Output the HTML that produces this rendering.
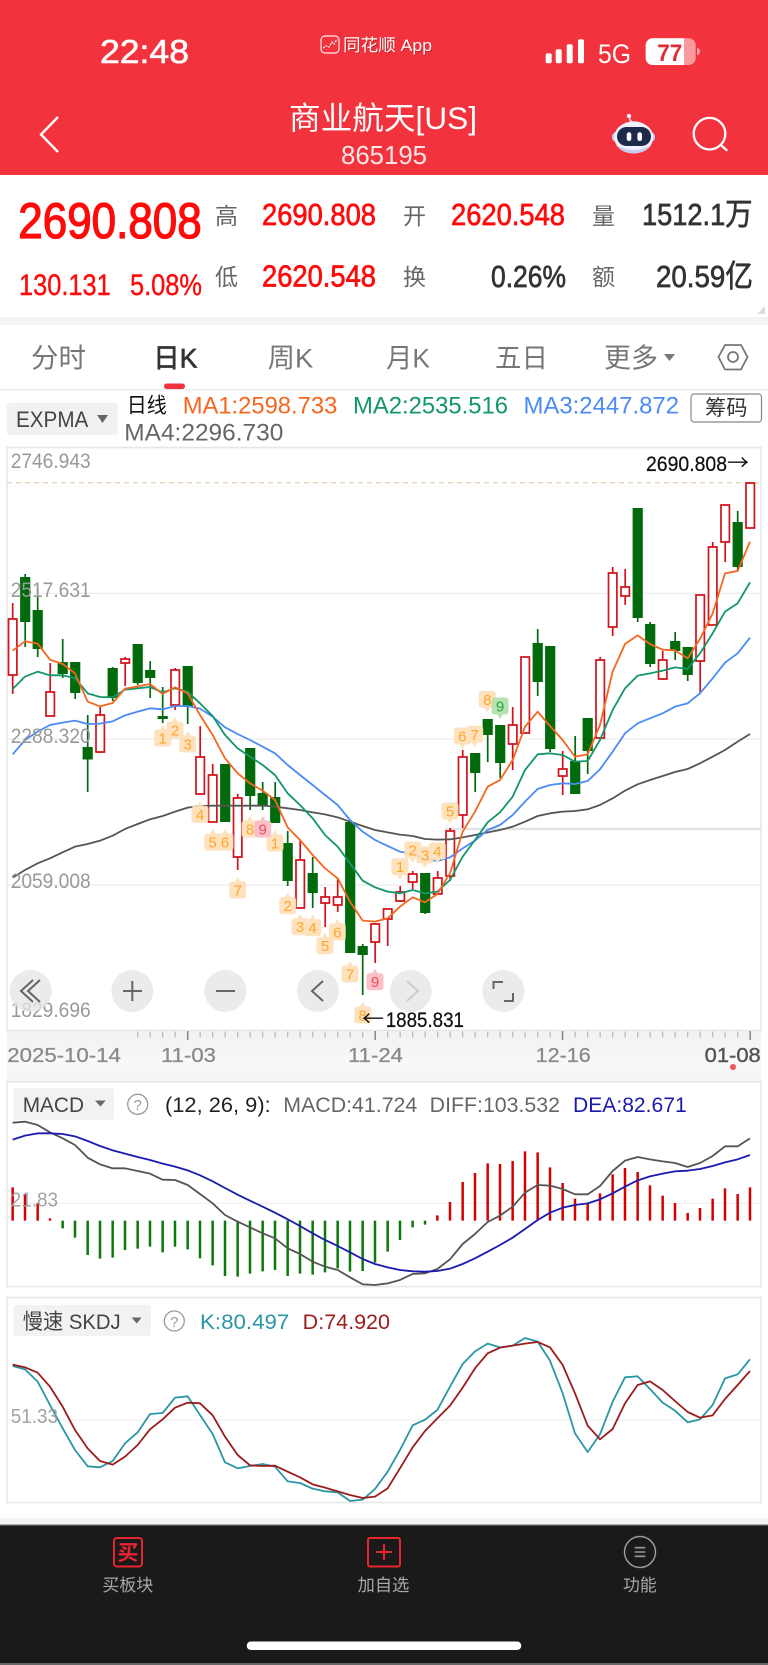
<!DOCTYPE html>
<html lang="zh"><head><meta charset="utf-8"><title>商业航天[US]</title>
<style>
html,body{margin:0;padding:0;background:#fff}
svg{display:block;font-family:"Liberation Sans","Noto Sans CJK SC",sans-serif}
</style></head><body>
<svg xmlns="http://www.w3.org/2000/svg" width="768" height="1665" viewBox="0 0 768 1665">
<rect width="768" height="1665" fill="#fff"/>
<!-- header -->
<rect width="768" height="175" fill="#f2323c"/>
<text x="100" y="63" font-size="33" fill="#fff" stroke="#fff" stroke-width=".6" textLength="89" lengthAdjust="spacingAndGlyphs">22:48</text>
<rect x="321" y="36" width="18" height="17" rx="4" fill="none" stroke="#fff" stroke-width="1.2" opacity=".9"/>
<path d="M323 48l3-2 3 1 3-5 2 2 3-5" fill="none" stroke="#fff" stroke-width="1.2" stroke-dasharray="2 1"/>
<text x="344" y="52" font-size="17" fill="#8a1018" opacity=".4" textLength="89" lengthAdjust="spacingAndGlyphs">同花顺 App</text>
<text x="343" y="51" font-size="17" fill="#fff" textLength="89" lengthAdjust="spacingAndGlyphs">同花顺 App</text>
<rect x="545.700" y="53.300" width="6" height="10" rx="1.800" fill="#fff"/><rect x="555.700" y="49.300" width="6" height="14" rx="1.800" fill="#fff"/><rect x="566.700" y="44.300" width="6" height="19" rx="1.800" fill="#fff"/><rect x="578" y="39.300" width="6" height="24" rx="1.800" fill="#fff"/>
<text x="598" y="63" font-size="27" fill="#fff" textLength="33" lengthAdjust="spacingAndGlyphs">5G</text>
<rect x="645.700" y="38.300" width="50" height="26.700" rx="7" fill="#fff" opacity=".5"/>
<path d="M652.700 38.300H684V65H652.700a7 7 0 0 1-7-7V45.300a7 7 0 0 1 7-7z" fill="#fff"/>
<path d="M697 48a3 3.500 0 0 1 0 7z" fill="#fff" opacity=".55"/>
<text x="657.300" y="60.800" font-size="24" font-weight="bold" fill="#e02a36" textLength="25" lengthAdjust="spacingAndGlyphs">77</text>
<text x="289" y="129" font-size="31.500" fill="#fff" textLength="188" lengthAdjust="spacingAndGlyphs">商业航天[US]</text>
<text x="341" y="164" font-size="26" fill="#fff" opacity=".88" textLength="86" lengthAdjust="spacingAndGlyphs">865195</text>
<path d="M58 117L41 134.500 58 152" fill="none" stroke="#fff" stroke-width="2.400"/>
<path d="M629.500 117q0 4 3 5" fill="none" stroke="#e6e8ff" stroke-width="1.500"/><circle cx="629" cy="116" r="2.200" fill="#e6e8ff"/>
<rect x="612" y="132" width="43" height="10" rx="4.500" fill="#c7cdf5"/>
<ellipse cx="633.700" cy="137.400" rx="19.500" ry="16" fill="#f0f1ff"/>
<path d="M616 145q17.700 10 35.400 0q-6 8.400-17.700 8.400t-17.700-8.400z" fill="#c9cdf2"/>
<rect x="617" y="127" width="34" height="19" rx="9.500" fill="#1e2a4a"/>
<rect x="626.700" y="132.300" width="4.600" height="8.700" rx="2.200" fill="#fff"/><rect x="637.400" y="132.300" width="4.600" height="8.700" rx="2.200" fill="#fff"/>
<circle cx="709.500" cy="133.700" r="15.800" fill="none" stroke="#fff" stroke-width="2.300"/>
<path d="M720.700 145l6.600 5.700" stroke="#fff" stroke-width="2.300" fill="none"/>
<!-- quote -->
<text x="18.300" y="238" font-size="50" fill="#ff0a0a" stroke="#ff0a0a" stroke-width="1.300" textLength="183.400" lengthAdjust="spacingAndGlyphs">2690.808</text>
<g fill="#666" font-size="23">
<text x="215" y="224">高</text><text x="403" y="224">开</text><text x="592" y="224">量</text>
<text x="215" y="285">低</text><text x="403" y="285">换</text><text x="592" y="285">额</text></g>
<g fill="#ff0a0a" font-size="30.500" stroke="#ff0a0a" stroke-width=".7">
<text x="262" y="225" textLength="114" lengthAdjust="spacingAndGlyphs">2690.808</text>
<text x="451" y="225" textLength="114" lengthAdjust="spacingAndGlyphs">2620.548</text>
<text x="262" y="286.700" textLength="114" lengthAdjust="spacingAndGlyphs">2620.548</text>
<text x="19" y="295" font-size="30" stroke-width=".4" textLength="91.700" lengthAdjust="spacingAndGlyphs">130.131</text>
<text x="130" y="295" font-size="30" stroke-width=".4" textLength="72" lengthAdjust="spacingAndGlyphs">5.08%</text></g>
<g fill="#333" font-size="31" stroke="#333" stroke-width=".7">
<text x="642" y="225" textLength="110.500" lengthAdjust="spacingAndGlyphs">1512.1万</text>
<text x="491" y="287" textLength="75" lengthAdjust="spacingAndGlyphs">0.26%</text>
<text x="656" y="287" textLength="97" lengthAdjust="spacingAndGlyphs">20.59亿</text></g>
<path d="M765 306v8h-8z" fill="#ddd"/>
<rect y="317" width="768" height="8" fill="#f4f4f4"/>
<!-- tabs -->
<g fill="#777" font-size="27">
<text x="31" y="367.500" textLength="55" lengthAdjust="spacingAndGlyphs">分时</text>
<text x="267.700" y="367.500" textLength="45.600" lengthAdjust="spacingAndGlyphs">周K</text>
<text x="386" y="367.500" textLength="44" lengthAdjust="spacingAndGlyphs">月K</text>
<text x="495" y="367.500" textLength="53" lengthAdjust="spacingAndGlyphs">五日</text>
<text x="604" y="367.500" textLength="54" lengthAdjust="spacingAndGlyphs">更多</text></g>
<text x="153.300" y="367.500" font-size="27" fill="#333" stroke="#333" stroke-width=".7" textLength="44" lengthAdjust="spacingAndGlyphs">日K</text>
<path d="M664 354h11l-5.500 7z" fill="#777"/>
<path d="M725 345h16l6.500 12-6.500 12.500h-16L718.500 357z" fill="none" stroke="#777" stroke-width="1.800"/>
<circle cx="733" cy="357" r="5" fill="none" stroke="#777" stroke-width="1.800"/>
<rect x="164" y="383.500" width="21" height="5.500" rx="2.700" fill="#f2323c"/>
<rect y="389" width="768" height="1.200" fill="#e6e6e6"/>
<!-- MA legend -->
<rect x="6.700" y="402.700" width="111" height="32.300" rx="3" fill="#f1f1f1"/>
<text x="16" y="427" font-size="22" fill="#444" textLength="72.300" lengthAdjust="spacingAndGlyphs">EXPMA</text>
<path d="M97 415h11l-5.500 8z" fill="#666"/>
<text x="126.700" y="412.500" font-size="21" fill="#111" textLength="40" lengthAdjust="spacingAndGlyphs">日线</text>
<text x="182.700" y="413.300" font-size="24.500" fill="#f5661f" textLength="154.600" lengthAdjust="spacingAndGlyphs">MA1:2598.733</text>
<text x="353" y="413.300" font-size="24.500" fill="#12966a" textLength="155" lengthAdjust="spacingAndGlyphs">MA2:2535.516</text>
<text x="523.500" y="413.300" font-size="24.500" fill="#4b8bf5" textLength="155.500" lengthAdjust="spacingAndGlyphs">MA3:2447.872</text>
<text x="124.300" y="440.700" font-size="24.500" fill="#666" textLength="159" lengthAdjust="spacingAndGlyphs">MA4:2296.730</text>
<rect x="691" y="394" width="70.500" height="28" rx="3" fill="#fff" stroke="#888" stroke-width="1.200"/>
<text x="705" y="415" font-size="21" fill="#333" textLength="42.500" lengthAdjust="spacingAndGlyphs">筹码</text>
<!-- main chart -->
<rect x="7" y="447.500" width="754" height="583" fill="#fff" stroke="#e6e6e6" stroke-width="1.500"/>
<path d="M7 593.300H761M7 739H761M7 885H761" stroke="#ececec" stroke-width="1.200" fill="none"/>
<path d="M445 829H761" stroke="#e2e2e2" stroke-width="2.200" fill="none"/>
<path d="M7 482.700H761" stroke="#e8d4b8" stroke-width="1.300" stroke-dasharray="5 4" fill="none"/>
<!-- green wicks -->
<path stroke="#006a0c" stroke-width="1.700" fill="none" d="M25.200 574V647M37.700 585V657M62.700 639V678M75.200 662V699M87.700 715V792M112.700 667V701M137.700 644V685M150.200 661V698M162.700 687V723M187.700 666V724M225.200 764V822M250.200 748V810M262.700 782V810M275.200 782V823M287.700 831V886M312.700 857V908M350.200 822V953M362.700 944V995M425.200 873V914M475.200 753V792M487.700 719V762M500.200 725V778M537.700 629V696M550.200 646V752M575.200 736V794M587.700 718V774M637.700 508V622M650.200 622V667M675.200 632V660M687.700 647V681M737.700 511V570"/>
<!-- green bodies -->
<path stroke="#006a0c" stroke-width="10.200" fill="none" d="M25.200 577V622M37.700 610V649M62.700 662V674M75.200 662V693M87.700 747V759.500M112.700 668V698M137.700 644V683M150.200 670V678M162.700 716V719M187.700 666V707M225.200 764V822M250.200 748V796M262.700 793V806M275.200 797V823M287.700 843V881M312.700 873V893M350.200 822V953M362.700 946V955M425.200 873V913M475.200 753V773M487.700 719V735M500.200 725V763M537.700 643V682M550.200 646V749M575.200 761V794M587.700 718V751M637.700 508V618M650.200 624V664M675.200 641V651M687.700 647V675M737.700 522V567"/>
<!-- red wicks -->
<path stroke="#d0121b" stroke-width="1.700" fill="none" d="M12.700 603V694M50.200 663V716M100.200 707V753M125.200 657V686M175.200 668V710M200.200 726V794M212.700 764V822M237.700 794V870M300.200 841V908M325.200 887V927M337.700 878V912M375.200 923V963M387.700 909V946M400.200 886V902M412.700 871V889M437.700 871V894M450.200 828V881M462.700 750V828M512.700 707V770M562.700 751V795M600.200 657V738M612.700 567V636M625.200 569V605M662.700 651V680M700.200 595V693M712.700 542V625M725.200 505V562"/>
<!-- red bodies -->
<path stroke="#d0121b" stroke-width="1.700" fill="#fff" d="M8.500 619h8.400v56h-8.400zM46 692h8.400v24h-8.400zM96 715h8.400v37h-8.400zM121 659h8.400v4h-8.400zM171 670h8.400v35h-8.400zM196 757h8.400v37h-8.400zM208.500 775h8.400v47h-8.400zM233.500 798h8.400v59h-8.400zM296 860h8.400v48h-8.400zM321 897h8.400v6h-8.400zM333.500 897h8.400v8h-8.400zM371 924h8.400v18h-8.400zM383.500 909h8.400v10h-8.400zM396 892h8.400v9h-8.400zM408.500 874h8.400v8h-8.400zM433.500 878h8.400v16h-8.400zM446 831h8.400v45h-8.400zM458.500 757h8.400v58h-8.400zM508.500 725h8.400v19h-8.400zM521 657h8.400v76h-8.400zM558.500 769h8.400v7h-8.400zM596 660h8.400v78h-8.400zM608.500 573h8.400v54h-8.400zM621 587h8.400v9h-8.400zM658.500 660h8.400v19h-8.400zM696 595h8.400v66h-8.400zM708.500 547h8.400v78h-8.400zM721 505h8.400v37h-8.400zM746 483h8.400v45h-8.400z"/>
<!-- MA lines -->
<g transform="translate(0,440) scale(.33333)" fill="none" stroke-width="5.400" stroke-linejoin="round">
<polyline stroke="#555" points="38,1313 75,1290 113,1270 150,1255 188,1237 225,1220 263,1212 300,1202 338,1187 375,1167 413,1152 450,1138 488,1128 525,1115 563,1103 600,1098 638,1097 675,1097 713,1097 750,1097 788,1097 825,1100 863,1105 900,1110 938,1117 975,1123 1013,1132 1050,1145 1088,1158 1125,1170 1163,1177 1200,1184 1238,1188 1275,1197 1312,1199 1350,1198 1388,1192 1425,1185 1463,1177 1500,1170 1538,1160 1575,1145 1613,1128 1650,1120 1688,1115 1725,1113 1763,1108 1800,1095 1838,1075 1875,1052 1913,1033 1950,1020 1988,1008 2025,996 2063,987 2100,970 2138,950 2175,930 2213,905 2250,882"/>
<polyline stroke="#4b8bf5" points="38,943 75,900 113,875 150,855 188,848 225,842 263,852 300,851 338,844 375,826 413,815 450,805 488,808 525,798 563,798 600,806 638,830 675,862 713,882 750,900 788,920 825,940 863,975 900,1005 938,1035 975,1065 1013,1095 1050,1140 1088,1175 1125,1200 1163,1218 1200,1235 1238,1242 1275,1258 1312,1263 1350,1252 1388,1225 1425,1202 1463,1170 1500,1155 1538,1125 1575,1085 1613,1047 1650,1035 1688,1030 1725,1032 1763,1023 1800,988 1838,935 1875,880 1913,850 1950,835 1988,820 2025,800 2063,790 2100,760 2138,715 2175,668 2213,640 2250,593"/>
<polyline stroke="#12966a" points="38,747 75,710 113,695 150,706 188,706 225,714 263,760 300,771 338,772 375,749 413,745 450,741 488,757 525,745 563,755 600,790 638,828 675,885 713,925 750,950 788,975 825,1005 863,1060 900,1095 938,1135 975,1185 1013,1220 1050,1270 1088,1322 1125,1342 1163,1355 1200,1360 1238,1350 1275,1360 1312,1355 1350,1320 1388,1250 1425,1200 1463,1147 1500,1117 1538,1070 1575,990 1613,943 1650,940 1688,945 1725,965 1763,963 1800,900 1838,810 1875,745 1913,707 1950,700 1988,692 2025,682 2063,687 2100,640 2138,580 2175,515 2213,490 2250,427"/>
<polyline stroke="#f5661f" points="38,632 75,604 113,611 150,659 188,672 225,700 263,785 300,799 338,789 375,746 413,739 450,732 488,762 525,742 563,760 600,825 638,885 675,955 713,1000 750,1030 788,1052 825,1080 863,1162 900,1200 938,1245 975,1285 1013,1315 1050,1385 1088,1442 1125,1445 1163,1435 1200,1400 1238,1372 1275,1387 1312,1362 1350,1300 1388,1175 1425,1115 1463,1040 1500,1020 1538,960 1575,860 1613,815 1650,858 1688,900 1725,950 1763,943 1800,855 1838,695 1875,612 1913,586 1950,612 1988,629 2025,631 2063,655 2100,597 2138,520 2175,400 2213,393 2250,305"/>
</g>
<!-- magic nine labels -->
<g font-size="15" text-anchor="middle">
<g fill="#fde0b8" opacity=".92">
<g transform="translate(162.700,738)"><rect x="-8.500" y="-8.500" width="17" height="17" rx="3"/><path d="M-3-8L0-13 3-8z"/></g>
<g transform="translate(175,730)"><rect x="-8.500" y="-8.500" width="17" height="17" rx="3"/><path d="M-3-8L0-13 3-8z"/></g>
<g transform="translate(187.700,744)"><rect x="-8.500" y="-8.500" width="17" height="17" rx="3"/><path d="M-3-8L0-13 3-8z"/></g>
<g transform="translate(200,814.300)"><rect x="-8.500" y="-8.500" width="17" height="17" rx="3"/><path d="M-3-8L0-13 3-8z"/></g>
<g transform="translate(212.700,842)"><rect x="-8.500" y="-8.500" width="17" height="17" rx="3"/><path d="M-3-8L0-13 3-8z"/></g>
<g transform="translate(225,842)"><rect x="-8.500" y="-8.500" width="17" height="17" rx="3"/><path d="M-3-8L0-13 3-8z"/></g>
<g transform="translate(237.700,890)"><rect x="-8.500" y="-8.500" width="17" height="17" rx="3"/><path d="M-3-8L0-13 3-8z"/></g>
<g transform="translate(250,829)"><rect x="-8.500" y="-8.500" width="17" height="17" rx="3"/><path d="M-3-8L0-13 3-8z"/></g>
<g transform="translate(275,843)"><rect x="-8.500" y="-8.500" width="17" height="17" rx="3"/><path d="M-3-8L0-13 3-8z"/></g>
<g transform="translate(287.700,905.700)"><rect x="-8.500" y="-8.500" width="17" height="17" rx="3"/><path d="M-3-8L0-13 3-8z"/></g>
<g transform="translate(300,926.700)"><rect x="-8.500" y="-8.500" width="17" height="17" rx="3"/><path d="M-3-8L0-13 3-8z"/></g>
<g transform="translate(312.700,927.700)"><rect x="-8.500" y="-8.500" width="17" height="17" rx="3"/><path d="M-3-8L0-13 3-8z"/></g>
<g transform="translate(325,945.700)"><rect x="-8.500" y="-8.500" width="17" height="17" rx="3"/><path d="M-3-8L0-13 3-8z"/></g>
<g transform="translate(337.300,932)"><rect x="-8.500" y="-8.500" width="17" height="17" rx="3"/><path d="M-3-8L0-13 3-8z"/></g>
<g transform="translate(350,974)"><rect x="-8.500" y="-8.500" width="17" height="17" rx="3"/><path d="M-3-8L0-13 3-8z"/></g>
<g transform="translate(362.700,1015)"><rect x="-8.500" y="-8.500" width="17" height="17" rx="3"/><path d="M-3-8L0-13 3-8z"/></g>
<g transform="translate(400,866.700)"><rect x="-8.500" y="-8.500" width="17" height="17" rx="3"/><path d="M-3 8L0 13 3 8z"/></g>
<g transform="translate(412.700,850)"><rect x="-8.500" y="-8.500" width="17" height="17" rx="3"/><path d="M-3 8L0 13 3 8z"/></g>
<g transform="translate(425,855)"><rect x="-8.500" y="-8.500" width="17" height="17" rx="3"/><path d="M-3 8L0 13 3 8z"/></g>
<g transform="translate(437.300,851)"><rect x="-8.500" y="-8.500" width="17" height="17" rx="3"/><path d="M-3 8L0 13 3 8z"/></g>
<g transform="translate(450,811)"><rect x="-8.500" y="-8.500" width="17" height="17" rx="3"/><path d="M-3 8L0 13 3 8z"/></g>
<g transform="translate(462.300,736)"><rect x="-8.500" y="-8.500" width="17" height="17" rx="3"/><path d="M-3 8L0 13 3 8z"/></g>
<g transform="translate(474.700,734.300)"><rect x="-8.500" y="-8.500" width="17" height="17" rx="3"/><path d="M-3 8L0 13 3 8z"/></g>
<g transform="translate(487.300,699.300)"><rect x="-8.500" y="-8.500" width="17" height="17" rx="3"/><path d="M-3 8L0 13 3 8z"/></g>
</g>
<g fill="#f9c0c8"><g transform="translate(262.700,829)"><rect x="-8.500" y="-8.500" width="17" height="17" rx="3"/><path d="M-3-8L0-13 3-8z"/></g>
<g transform="translate(375,981.700)"><rect x="-8.500" y="-8.500" width="17" height="17" rx="3"/><path d="M-3-8L0-13 3-8z"/></g></g>
<g fill="#b7e2b2"><rect x="491.500" y="697.500" width="17" height="17" rx="3"/><path d="M497 714L500 719 503 714z"/></g>
<g fill="#ffa62b">
<text x="162.700" y="743.500">1</text><text x="175" y="735.500">2</text><text x="187.700" y="749.500">3</text><text x="200" y="819.800">4</text><text x="212.700" y="847.500">5</text><text x="225" y="847.500">6</text><text x="237.700" y="895.500">7</text><text x="250" y="834.500">8</text><text x="275" y="848.500">1</text><text x="287.700" y="911">2</text><text x="300" y="932">3</text><text x="312.700" y="933">4</text><text x="325" y="951">5</text><text x="337.300" y="937.500">6</text><text x="350" y="979.500">7</text><text x="362.700" y="1020.500">8</text><text x="400" y="872">1</text><text x="412.700" y="855.500">2</text><text x="425" y="860.500">3</text><text x="437.300" y="856.500">4</text><text x="450" y="816.500">5</text><text x="462.300" y="741.500">6</text><text x="474.700" y="739.800">7</text><text x="487.300" y="704.800">8</text></g>
<g fill="#ee4d5f"><text x="262.700" y="834.500">9</text><text x="375" y="987">9</text></g>
<text x="500" y="711.500" fill="#22a83a">9</text>
</g>
<!-- axis labels -->
<g fill="#999" font-size="21.500">
<text x="10.700" y="468" textLength="80" lengthAdjust="spacingAndGlyphs">2746.943</text>
<text x="10.700" y="597" textLength="80" lengthAdjust="spacingAndGlyphs">2517.631</text>
<text x="10.700" y="743" textLength="80" lengthAdjust="spacingAndGlyphs">2288.320</text>
<text x="10.700" y="888" textLength="80" lengthAdjust="spacingAndGlyphs">2059.008</text>
<text x="10.700" y="1017" textLength="80" lengthAdjust="spacingAndGlyphs">1829.696</text></g>
<text x="646" y="471" font-size="21.500" fill="#111" stroke="#111" stroke-width=".25" textLength="81" lengthAdjust="spacingAndGlyphs">2690.808</text>
<text x="727" y="470" font-size="21" fill="#111" font-family="'Noto Sans CJK SC',sans-serif" textLength="22" lengthAdjust="spacingAndGlyphs">→</text>
<text x="362" y="1026" font-size="21" fill="#111" font-family="'Noto Sans CJK SC',sans-serif" textLength="22" lengthAdjust="spacingAndGlyphs">←</text>
<text x="385.700" y="1027" font-size="21.500" fill="#111" stroke="#111" stroke-width=".25" textLength="78.300" lengthAdjust="spacingAndGlyphs">1885.831</text>
<!-- overlay buttons -->
<g fill="#e6e6e6" opacity=".78"><circle cx="30.700" cy="991" r="21"/><circle cx="132.300" cy="991" r="21"/><circle cx="225.300" cy="991" r="21"/><circle cx="318" cy="991" r="21"/><circle cx="410.700" cy="991" r="21"/><circle cx="503.300" cy="991" r="21"/></g>
<g fill="none" stroke="#666" stroke-width="2">
<path d="M33 980L21 991 33 1002M40 980L28 991 40 1002"/>
<path d="M123 991H142M132.300 981V1001"/>
<path d="M216 991H235"/>
<path d="M323 981L312 991 323 1001"/>
<path d="M407 981L418 991 407 1001" stroke="#ccc"/>
<path d="M493.500 989V982H503M513 993V1001H504"/></g>
<!-- time axis -->
<defs><linearGradient id="ga" x1="0" y1="0" x2="0" y2="1"><stop offset="0" stop-color="#f1f1f1"/><stop offset=".6" stop-color="#f8f8f8"/><stop offset="1" stop-color="#f3f3f3"/></linearGradient></defs>
<rect x="7" y="1031" width="754" height="51" fill="url(#ga)"/>
<path d="M137 1034.500H751" stroke="#bbb" stroke-width="6" stroke-dasharray="1.300 11.200" fill="none"/>
<path d="M187.700 1031V1040M375.200 1031V1040M562.500 1031V1040M750.200 1031V1040" stroke="#888" stroke-width="1.500" fill="none"/>
<g fill="#8a8a8a" font-size="20" stroke="#8a8a8a" stroke-width=".3">
<text x="7.300" y="1062" textLength="113.500" lengthAdjust="spacingAndGlyphs">2025-10-14</text>
<text x="161" y="1062" textLength="55" lengthAdjust="spacingAndGlyphs">11-03</text>
<text x="348" y="1062" textLength="55" lengthAdjust="spacingAndGlyphs">11-24</text>
<text x="535.700" y="1062" textLength="55" lengthAdjust="spacingAndGlyphs">12-16</text></g>
<text x="704.700" y="1062" font-size="20" fill="#555" stroke="#555" stroke-width=".4" textLength="56" lengthAdjust="spacingAndGlyphs">01-08</text>
<circle cx="733" cy="1067" r="3" fill="#f0545f"/>
<!-- MACD -->
<rect x="7" y="1082" width="754" height="204.500" fill="#fff" stroke="#e6e6e6" stroke-width="1.500"/>
<path d="M7 1203.300H761" stroke="#ececec" stroke-width="1" fill="none"/>
<rect x="13.700" y="1088" width="100.300" height="32" rx="3" fill="#f2f2f2"/>
<text x="22.700" y="1112" font-size="21.500" fill="#444" textLength="61.300" lengthAdjust="spacingAndGlyphs">MACD</text>
<path d="M95 1100.500h10.700l-5.300 6z" fill="#666"/>
<circle cx="137.700" cy="1104.300" r="10" fill="none" stroke="#999" stroke-width="1.300"/>
<text x="137.700" y="1110" font-size="15" fill="#999" text-anchor="middle">?</text>
<text x="165" y="1112" font-size="21" fill="#222" textLength="105.700" lengthAdjust="spacingAndGlyphs">(12, 26, 9):</text>
<text x="283.300" y="1112" font-size="21" fill="#666" textLength="134" lengthAdjust="spacingAndGlyphs">MACD:41.724</text>
<text x="429.700" y="1112" font-size="21" fill="#666" textLength="130.300" lengthAdjust="spacingAndGlyphs">DIFF:103.532</text>
<text x="573" y="1112" font-size="21" fill="#1a1ab0" textLength="113.700" lengthAdjust="spacingAndGlyphs">DEA:82.671</text>
<g transform="translate(0,1070) scale(.33333)" fill="none">
<path stroke="#d40000" stroke-width="7.500" d="M38 452V352M75 452V372M113 452V400M150 452V445M1312 452V436M1350 452V396M1388 452V336M1425 452V309M1463 452V280M1500 452V282M1538 452V273M1575 452V244M1613 452V247M1650 452V292M1688 452V339M1725 452V386M1763 452V400M1800 452V370M1838 452V313M1875 452V294M1913 452V306M1950 452V346M1988 452V377M2025 452V399M2063 452V429M2100 452V414M2138 452V386M2175 452V355M2213 452V372M2250 452V352"/>
<path stroke="#0a7a0a" stroke-width="7.500" d="M188 452V475M225 452V503M263 452V555M300 452V566M338 452V563M375 452V540M413 452V536M450 452V530M488 452V547M525 452V530M563 452V538M600 452V565M638 452V586M675 452V618M713 452V620M750 452V611M788 452V604M825 452V600M863 452V618M900 452V611M938 452V614M975 452V607M1013 452V595M1050 452V605M1088 452V603M1125 452V578M1163 452V545M1200 452V510M1238 452V472M1275 452V464"/>
<polyline stroke="#555" stroke-width="5.400" stroke-linejoin="round" points="38,158 75,155 113,165 150,187 188,205 225,225 263,263 300,283 338,295 375,295 413,303 450,311 488,329 525,330 563,345 600,372 638,400 675,435 713,455 750,472 788,490 825,505 863,535 900,552 938,575 975,590 1013,600 1050,622 1088,643 1125,645 1163,640 1200,630 1238,612 1275,610 1312,597 1350,568 1388,522 1425,492 1463,456 1500,437 1538,410 1575,368 1613,345 1650,347 1688,357 1725,373 1763,373 1800,348 1838,303 1875,272 1913,261 1950,268 1988,274 2025,279 2063,291 2100,279 2138,258 2175,229 2213,229 2250,205"/>
<polyline stroke="#1a1ab0" stroke-width="5.400" stroke-linejoin="round" points="38,209 75,197 113,190 150,190 188,192 225,199 263,213 300,228 338,241 375,251 413,261 450,270 488,281 525,290 563,301 600,316 638,334 675,354 713,374 750,392 788,410 825,428 863,448 900,468 938,490 975,510 1013,528 1050,547 1088,567 1125,582 1163,592 1200,600 1238,604 1275,605 1312,603 1350,596 1388,582 1425,565 1463,545 1500,525 1538,503 1575,477 1613,450 1650,428 1688,413 1725,405 1763,400 1800,388 1838,370 1875,350 1913,331 1950,319 1988,311 2025,304 2063,302 2100,297 2138,288 2175,277 2213,268 2250,255"/>
</g>
<text x="10.700" y="1206.500" font-size="20.500" fill="#999" opacity=".9" textLength="47.300" lengthAdjust="spacingAndGlyphs">21.83</text>
<!-- SKDJ -->
<rect x="7" y="1297.500" width="754" height="205" fill="#fff" stroke="#e6e6e6" stroke-width="1.500"/>
<path d="M7 1420H761" stroke="#ececec" stroke-width="1" fill="none"/>
<rect x="13.700" y="1305" width="137.300" height="31" rx="3" fill="#f2f2f2"/>
<text x="22.700" y="1329" font-size="21.500" fill="#444" textLength="98" lengthAdjust="spacingAndGlyphs">慢速 SKDJ</text>
<path d="M131.700 1317.500h10l-5 6z" fill="#666"/>
<circle cx="174.300" cy="1321" r="10" fill="none" stroke="#999" stroke-width="1.300"/>
<text x="174.300" y="1327" font-size="15" fill="#999" text-anchor="middle">?</text>
<text x="200" y="1329" font-size="21" fill="#2a96a5" textLength="89.300" lengthAdjust="spacingAndGlyphs">K:80.497</text>
<text x="302.700" y="1329" font-size="21" fill="#9b1c1c" textLength="87.300" lengthAdjust="spacingAndGlyphs">D:74.920</text>
<g transform="translate(0,1290) scale(.33333)" fill="none" stroke-width="5.400" stroke-linejoin="round">
<polyline stroke="#2a96a5" points="38,228 75,238 113,275 150,345 188,415 225,480 263,529 300,532 338,513 375,460 413,427 450,372 488,369 525,323 563,319 600,375 638,432 675,517 713,535 750,528 788,522 825,530 863,574 900,579 938,596 975,604 1013,607 1050,633 1088,629 1125,597 1163,545 1200,480 1238,406 1275,389 1312,360 1350,290 1388,222 1425,184 1463,161 1500,172 1538,167 1575,144 1613,155 1650,212 1688,310 1725,430 1763,486 1800,433 1838,335 1875,262 1913,259 1950,297 1988,338 2025,362 2063,397 2100,388 2138,345 2175,265 2213,253 2250,208"/>
<polyline stroke="#9b1c1c" points="38,224 75,232 113,248 150,290 188,350 225,420 263,475 300,513 338,524 375,500 413,465 450,418 488,388 525,353 563,338 600,340 638,376 675,440 713,495 750,526 788,528 825,527 863,545 900,562 938,583 975,593 1013,604 1050,615 1088,624 1125,620 1163,595 1200,535 1238,472 1275,423 1312,385 1350,347 1388,293 1425,235 1463,190 1500,173 1538,167 1575,161 1613,156 1650,172 1688,225 1725,310 1763,407 1800,448 1838,417 1875,340 1913,285 1950,274 1988,300 2025,333 2063,366 2100,383 2138,376 2175,327 2213,285 2250,243"/>
</g>
<text x="10.700" y="1423" font-size="20.500" fill="#999" opacity=".9" textLength="47.300" lengthAdjust="spacingAndGlyphs">51.33</text>
<!-- bottom -->
<rect y="1518" width="768" height="7" fill="#f4f4f4"/>
<rect y="1525" width="768" height="140" fill="#1a1a1a"/>
<rect y="1524.500" width="768" height="1.200" fill="#666"/>
<rect y="1663" width="768" height="2" fill="#666"/>
<rect x="114" y="1538" width="28" height="28.500" rx="3" fill="none" stroke="#e8242f" stroke-width="2"/>
<text x="128" y="1560" font-size="21" font-weight="bold" fill="#e8242f" text-anchor="middle">买</text>
<text x="102.300" y="1591" font-size="17" fill="#a8a8a8" textLength="51" lengthAdjust="spacingAndGlyphs">买板块</text>
<rect x="368" y="1538" width="32" height="28.500" rx="2" fill="none" stroke="#e8242f" stroke-width="2"/>
<path d="M376 1552H392M384 1544V1560" stroke="#e8242f" stroke-width="2" fill="none"/>
<text x="357.700" y="1591" font-size="17" fill="#a8a8a8" textLength="51.600" lengthAdjust="spacingAndGlyphs">加自选</text>
<circle cx="640" cy="1552" r="15.500" fill="none" stroke="#999" stroke-width="1.500"/>
<path d="M634.700 1547.700H645.300M634.700 1552H645.300M634.700 1556.300H645.300" stroke="#999" stroke-width="1.600" fill="none"/>
<text x="623" y="1591" font-size="17" fill="#a8a8a8" textLength="33.700" lengthAdjust="spacingAndGlyphs">功能</text>
<rect x="246.700" y="1641.500" width="274.600" height="8.500" rx="4.200" fill="#fff"/>
</svg>
</body></html>
